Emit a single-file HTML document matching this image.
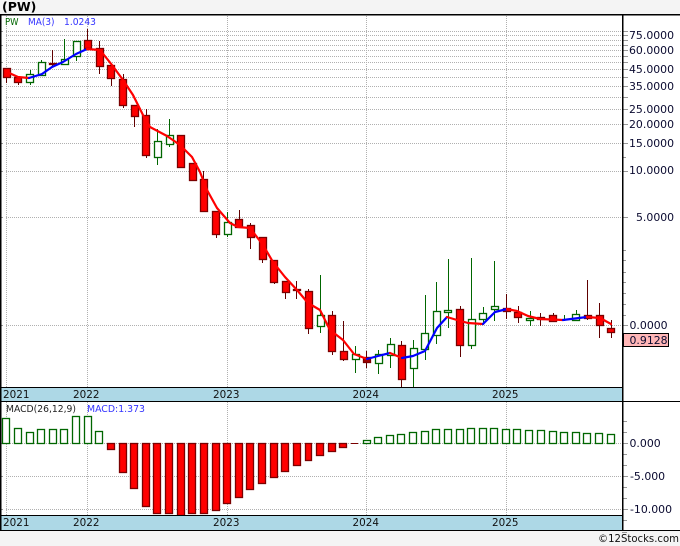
<!DOCTYPE html>
<html><head><meta charset="utf-8"><style>
html,body{margin:0;padding:0;background:#f4f4f4}
svg{display:block}
text{font-family:"DejaVu Sans","Liberation Sans",sans-serif}
</style></head><body>
<svg width="680" height="546" viewBox="0 0 680 546" xmlns="http://www.w3.org/2000/svg">
<rect width="680" height="546" fill="#f4f4f4"/>
<rect x="0" y="14" width="680" height="517" fill="#fff"/>
<text x="2" y="11" font-size="12.5" font-weight="bold" fill="#000">(PW)</text>
<g shape-rendering="crispEdges">
<path fill="none" stroke="#b0b0b0" stroke-dasharray="1 1" d="M6 31.5H622M6 35.5H622M6 40.5H622M6 45.5H622M6 50.5H622M6 56.5H622M6 62.5H622M6 69.5H622M6 77.5H622M6 86.5H622M6 97.5H622M6 109.5H622M6 124.5H622M6 143.5H622M6 171.5H622M6 217.5H622M6 325.5H622M6 443.5H622M6 476.5H622M6 509.5H622M6.5 16V530M87.5 16V530M227.5 16V530M366.5 16V530M506.5 16V530"/>
<path fill="none" stroke="#999" d="M623 31.5h5M623 35.5h5M623 40.5h5M623 45.5h5M623 50.5h5M623 56.5h5M623 62.5h5M623 69.5h5M623 77.5h5M623 86.5h5M623 97.5h5M623 109.5h5M623 124.5h5M623 143.5h5M623 157.5h3M623 171.5h5M623 217.5h5M623 250.5h3M623 260.5h3M623 272.5h3M623 282.5h3M623 293.5h3M623 304.5h3M623 315.5h3M623 325.5h5M623 421.5h4M623 432.5h4M623 443.5h5M623 454.5h4M623 465.5h4M623 476.5h5M623 487.5h4M623 498.5h4M623 509.5h5M623 520.5h4M622 532.5h5M1 31.5h2M1 45.5h2M1 62.5h2M1 86.5h2M1 109.5h2M1 143.5h2M1 171.5h2M1 217.5h2M1 325.5h2M1 443.5h2M1 476.5h2M1 509.5h2"/>
<path fill="none" stroke="#600000" d="M6.5 68V83M18.5 77V85M52.5 50V66M87.5 29V48M99.5 41V74M111.5 65V86M123.5 74V108M134.5 105V127M146.5 109V158M181.5 135V168M192.5 163V181M203.5 171V212M216.5 211V238M239.5 210V227M250.5 223V249M262.5 237V263M274.5 260V284M285.5 281V299M296.5 281V299M308.5 289V334M332.5 311V355M343.5 321V361M366.5 351V368M401.5 341V387M460.5 306V357M506.5 294V319M518.5 306V323M540.5 313V326M553.5 313V322M587.5 280V320M599.5 303V338M611.5 320V338"/>
<path fill="none" stroke="#060" d="M30.5 70V85M41.5 60V75M64.5 39V64M76.5 41V61M157.5 129V165M169.5 119V147M227.5 212V237M320.5 275V333M355.5 346V373M378.5 350V374M390.5 338V368M413.5 340V387M425.5 295V360M436.5 282V344M448.5 259V328M471.5 258V349M483.5 307V324M494.5 261V321M530.5 311V326M564.5 315V321M576.5 310V320"/>
</g>
<g fill="#fff" stroke="#060" stroke-width="1.3">
<rect x="26.5" y="74.5" width="7" height="8"/><rect x="38.5" y="62.5" width="7" height="13"/><rect x="61.5" y="59.5" width="7" height="5"/><rect x="73.5" y="41.5" width="7" height="15"/><rect x="154.5" y="141.5" width="7" height="16"/><rect x="166.5" y="135.5" width="7" height="9"/><rect x="224.5" y="222.5" width="7" height="12"/><rect x="317.5" y="315.5" width="7" height="11"/><rect x="352.5" y="354.5" width="7" height="5"/><rect x="375.5" y="354.5" width="7" height="9"/><rect x="387.5" y="344.5" width="7" height="11"/><rect x="410.5" y="348.5" width="7" height="20"/><rect x="421.5" y="333.5" width="7" height="16"/><rect x="433.5" y="311.5" width="7" height="24"/><rect x="444.5" y="310.5" width="7" height="2"/><rect x="468.5" y="319.5" width="7" height="26"/><rect x="479.5" y="313.5" width="7" height="6"/><rect x="491.5" y="306.5" width="7" height="3"/><rect x="526.5" y="318.5" width="7" height="2"/><rect x="572.5" y="314.5" width="7" height="6"/>
</g>
<g fill="#f00" stroke="#7a0000" stroke-width="1.3">
<rect x="3.5" y="68.5" width="7" height="9"/><rect x="14.5" y="77.5" width="7" height="5"/><rect x="49.5" y="63.5" width="7" height="1" fill="#600000"/><rect x="84.5" y="40.5" width="7" height="8"/><rect x="96.5" y="48.5" width="7" height="18"/><rect x="107.5" y="65.5" width="7" height="13"/><rect x="119.5" y="79.5" width="7" height="26"/><rect x="131.5" y="105.5" width="7" height="11"/><rect x="142.5" y="115.5" width="7" height="40"/><rect x="177.5" y="135.5" width="7" height="32"/><rect x="189.5" y="163.5" width="7" height="17"/><rect x="200.5" y="179.5" width="7" height="32"/><rect x="212.5" y="211.5" width="7" height="23"/><rect x="235.5" y="219.5" width="7" height="8"/><rect x="247.5" y="225.5" width="7" height="12"/><rect x="259.5" y="237.5" width="7" height="22"/><rect x="270.5" y="260.5" width="7" height="22"/><rect x="282.5" y="281.5" width="7" height="11"/><rect x="293.5" y="289.5" width="7" height="1" fill="#600000"/><rect x="305.5" y="291.5" width="7" height="37"/><rect x="328.5" y="315.5" width="7" height="36"/><rect x="340.5" y="351.5" width="7" height="8"/><rect x="363.5" y="357.5" width="7" height="5" fill="#a00000"/><rect x="398.5" y="345.5" width="7" height="34"/><rect x="456.5" y="309.5" width="7" height="36"/><rect x="503.5" y="308.5" width="7" height="3"/><rect x="514.5" y="312.5" width="7" height="5"/><rect x="537.5" y="317.5" width="7" height="2"/><rect x="549.5" y="315.5" width="7" height="6"/><rect x="584.5" y="315.5" width="7" height="3"/><rect x="596.5" y="315.5" width="7" height="10"/><rect x="607.5" y="328.5" width="7" height="4"/>
</g>
<g fill="none" stroke-width="2.2" stroke-linejoin="round" stroke-linecap="round">
<path stroke="#f00" d="M7 72L18 77L29 78"/>
<path stroke="#00f" d="M29 78L42 74L52 67L63 62L76 54L87 49"/>
<path stroke="#f00" d="M87 49L100 50L112 65L123 80L133 95L143 115L150 127L167 136L180 145L192 157L200 172L207 190L217 208L230 223L238 227L250 228L263 245L273 262L285 277L297 290L308 303L320 310L330 330L343 340L354 354L367 359"/>
<path stroke="#00f" d="M367 359L378 356L390 353"/>
<path stroke="#f00" d="M390 353L402 358"/>
<path stroke="#00f" d="M402 358L413 356L425 351L437 328L447 317"/>
<path stroke="#f00" d="M447 317L457 320L468 323L483 324"/>
<path stroke="#00f" d="M483 324L495 312L507 309"/>
<path stroke="#f00" d="M507 309L517 311L528 316L540 319L563 320"/>
<path stroke="#00f" d="M563 320L587 317"/>
<path stroke="#f00" d="M587 317L600 318L611 324"/>
</g>
<g fill="#fff" stroke="#060" stroke-width="1.3">
<rect x="2.500" y="418.5" width="7" height="25"/><rect x="14.5" y="428.5" width="7" height="15"/><rect x="26.5" y="432.5" width="7" height="11"/><rect x="37.5" y="429.5" width="7" height="14"/><rect x="49.5" y="429.5" width="7" height="14"/><rect x="60.5" y="429.5" width="7" height="14"/><rect x="72.5" y="416.5" width="7" height="27"/><rect x="84.5" y="416.5" width="7" height="27"/><rect x="95.5" y="431.5" width="7" height="12"/>
<rect x="363.5" y="440.5" width="7" height="3"/><rect x="374.5" y="437.5" width="7" height="6"/><rect x="386.5" y="435.5" width="7" height="8"/><rect x="397.5" y="434.5" width="7" height="9"/><rect x="409.5" y="432.5" width="7" height="11"/><rect x="421.5" y="431.5" width="7" height="12"/><rect x="432.5" y="429.5" width="7" height="14"/><rect x="444.5" y="429.5" width="7" height="14"/><rect x="456.5" y="429.5" width="7" height="14"/><rect x="467.5" y="428.5" width="7" height="15"/><rect x="479.5" y="428.5" width="7" height="15"/><rect x="490.5" y="428.5" width="7" height="15"/><rect x="502.5" y="429.5" width="7" height="14"/><rect x="513.5" y="429.5" width="7" height="14"/><rect x="525.5" y="430.5" width="7" height="13"/><rect x="537.5" y="430.5" width="7" height="13"/><rect x="549.5" y="431.5" width="7" height="12"/><rect x="560.5" y="432.5" width="7" height="11"/><rect x="572.5" y="432.5" width="7" height="11"/><rect x="583.5" y="433.5" width="7" height="10"/><rect x="595.5" y="433.5" width="7" height="10"/><rect x="607.5" y="434.5" width="7" height="9"/>
</g>
<g fill="#f00" stroke="#7a0000" stroke-width="1.3">
<rect x="107.5" y="443.5" width="7" height="6"/><rect x="119.5" y="443.5" width="7" height="29"/><rect x="130.5" y="443.5" width="7" height="45"/><rect x="142.5" y="443.5" width="7" height="63"/><rect x="153.5" y="443.5" width="7" height="70"/><rect x="165.5" y="443.5" width="7" height="70"/><rect x="177.5" y="443.5" width="7" height="72"/><rect x="188.5" y="443.5" width="7" height="70"/><rect x="200.5" y="443.5" width="7" height="70"/><rect x="212.5" y="443.5" width="7" height="67"/><rect x="223.5" y="443.5" width="7" height="60"/><rect x="235.5" y="443.5" width="7" height="54"/><rect x="246.5" y="443.5" width="7" height="46"/><rect x="258.5" y="443.5" width="7" height="40"/><rect x="270.5" y="443.5" width="7" height="34"/><rect x="281.5" y="443.5" width="7" height="28"/><rect x="293.5" y="443.5" width="7" height="22"/><rect x="305.5" y="443.5" width="6" height="17"/><rect x="316.5" y="443.5" width="7" height="12"/><rect x="328.5" y="443.5" width="7" height="8"/><rect x="339.5" y="443.5" width="7" height="4"/>
</g>
<path stroke="#7a0000" d="M351 443.5h7" fill="none" shape-rendering="crispEdges"/>
<rect x="0" y="387" width="622" height="14" fill="#add8e6" shape-rendering="crispEdges"/>
<rect x="0" y="515" width="622" height="16" fill="#add8e6" shape-rendering="crispEdges"/>
<g fill="#000">
<rect x="0" y="14" width="680" height="1.5"/>
<rect x="0" y="14" width="1.5" height="517"/>
<rect x="622" y="14" width="1.5" height="517"/>
<rect x="0" y="387" width="622" height="1"/>
<rect x="0" y="401" width="680" height="1"/>
<rect x="0" y="515" width="622" height="1"/>
<rect x="0" y="530" width="680" height="1"/>
</g>
<rect x="623.5" y="333.5" width="45" height="13" fill="#ffb6b6" stroke="#000" shape-rendering="crispEdges"/>
<g font-size="9.6" fill="#111">
<text x="5" y="25" fill="#060" textLength="13.500" lengthAdjust="spacingAndGlyphs">PW</text>
<text x="28" y="25" fill="#33f" textLength="26.500" lengthAdjust="spacingAndGlyphs">MA(3)</text>
<text x="64" y="25" fill="#33f" textLength="32" lengthAdjust="spacingAndGlyphs">1.0243</text>
<text x="6" y="412" fill="#222" textLength="70" lengthAdjust="spacingAndGlyphs">MACD(26,12,9)</text>
<text x="87" y="412" fill="#33f" textLength="58" lengthAdjust="spacingAndGlyphs">MACD:1.373</text>
</g>
<g font-size="10.9" fill="#0a0a30">
<text x="629" y="39">75.0000</text>
<text x="629" y="54">60.0000</text>
<text x="629" y="73">45.0000</text>
<text x="629" y="90">35.0000</text>
<text x="629" y="113">25.0000</text>
<text x="629" y="128">20.0000</text>
<text x="629" y="147">15.0000</text>
<text x="629" y="174">10.0000</text>
<text x="636" y="221">5.0000</text>
<text x="629.500" y="329">0.0000</text>
<text x="629.500" y="344">0.9128</text>
<text x="629.500" y="447">0.000</text>
<text x="630" y="480">-5.000</text>
<text x="630" y="513">-10.000</text>
</g>
<g font-size="10.4" fill="#111">
<text x="3" y="398">2021</text><text x="73" y="398">2022</text><text x="213" y="398">2023</text><text x="352.500" y="398">2024</text><text x="492" y="398">2025</text>
<text x="3" y="526">2021</text><text x="73" y="526">2022</text><text x="213" y="526">2023</text><text x="352.500" y="526">2024</text><text x="492" y="526">2025</text>
</g>
<text x="598" y="542" font-size="11" fill="#111" textLength="81" lengthAdjust="spacingAndGlyphs">©12Stocks.com</text>
</svg>
</body></html>
